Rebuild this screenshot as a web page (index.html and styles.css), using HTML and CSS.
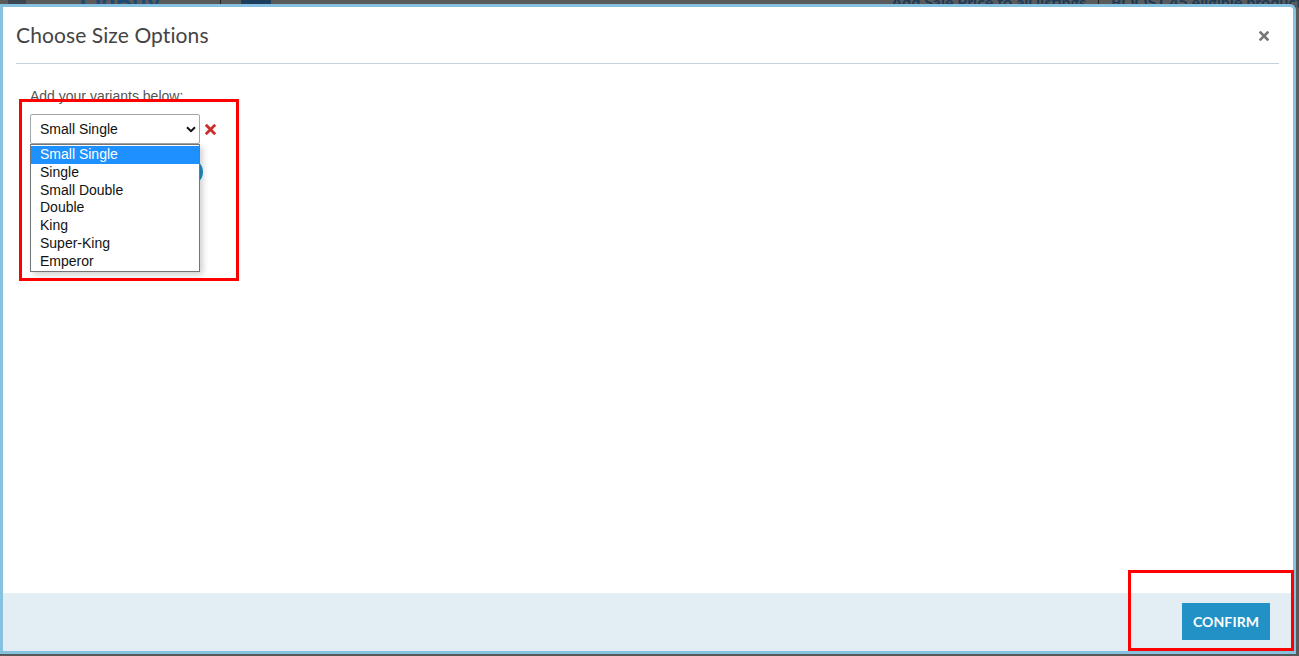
FILE: index.html
```html
<!DOCTYPE html>
<html lang="en">
<head>
<meta charset="utf-8">
<title>Choose Size Options</title>
<link rel="stylesheet" href="styles.css">
</head>
<body>
<div class="backdrop">
  <div class="topnav">
    <span class="nav-menu"></span>
    <span class="nav-logo">OnBuy</span>
    <span class="nav-sep"></span>
    <span class="nav-btn"></span>
    <span class="nav-links">
      <span class="nav-link">Add Sale Price to all listings</span>
      <span class="nav-sep"></span>
      <span class="nav-link">BOOST 45 eligible products</span>
    </span>
  </div>
</div>

<div class="modal">
  <div class="modal-header">
    <h2 class="modal-title">Choose Size Options</h2>
    <button class="modal-close" aria-label="Close">
      <svg width="10" height="10" viewBox="0 0 10 10"><path d="M1.5 1.5 L8.5 8.5 M8.5 1.5 L1.5 8.5" stroke="#777" stroke-width="2.6" stroke-linecap="square"/></svg>
    </button>
  </div>
  <div class="modal-body">
    <p class="hint">Add your variants below:</p>
    <div class="variant-row">
      <div class="select">
        <span class="select-value">Small Single</span>
        <svg class="chevron" width="10" height="7" viewBox="0 0 10 7"><path d="M1 1.2 L5 5.2 L9 1.2" fill="none" stroke="#111" stroke-width="2"/></svg>
        <ul class="options">
          <li class="opt active">Small Single</li>
          <li class="opt">Single</li>
          <li class="opt">Small Double</li>
          <li class="opt">Double</li>
          <li class="opt">King</li>
          <li class="opt">Super-King</li>
          <li class="opt">Emperor</li>
        </ul>
      </div>
      <button class="remove" aria-label="Remove">
        <svg width="11" height="11" viewBox="0 0 11 11"><path d="M1.8 1.8 L9.2 9.2 M9.2 1.8 L1.8 9.2" stroke="#c9302c" stroke-width="2.8" stroke-linecap="square"/></svg>
      </button>
    </div>
    <div class="add-row">
      <span class="add-btn"></span>
    </div>
  </div>
  <div class="modal-footer">
    <button class="confirm">CONFIRM</button>
  </div>
</div>

<div class="annot annot-select"></div>
<div class="annot annot-confirm"></div>
</body>
</html>
```

FILE: styles.css
```css
html, body {
  margin: 0;
  padding: 0;
}
body {
  width: 1299px;
  height: 656px;
  overflow: hidden;
  background: #585858;
  font-family: "Liberation Sans", Arial, sans-serif;
  position: relative;
}

.backdrop {
  height: 656px;
  background: #5a5a5a;
}
.topnav {
  display: flex;
  align-items: center;
  height: 22px;
  margin-top: -10px;
  padding-left: 8px;
  font-family: "Lato", sans-serif;
  font-weight: 700;
  font-size: 16px;
  color: #1b3a57;
}
.nav-menu {
  width: 18px;
  height: 10px;
  background: #3c4650;
}
.nav-logo {
  margin-left: 54px;
  font-size: 26px;
  color: #1d4a73;
}
.nav-sep {
  width: 1px;
  height: 20px;
  margin: 0 12px;
  background: #222;
}
.nav-logo + .nav-sep {
  margin-left: 60px;
}
.nav-btn {
  width: 30px;
  height: 12px;
  margin-left: 8px;
  background: #1d3d5c;
}
.nav-links {
  margin-left: auto;
  margin-right: -10px;
  display: flex;
  align-items: center;
}
.nav-link {
  white-space: nowrap;
}

.modal {
  position: absolute;
  top: 4px;
  left: 0;
  width: 1296px;
  height: 650px;
  box-sizing: border-box;
  border: 3px solid #86c1e0;
  border-radius: 0 6px 0 0;
  background: #fff;
  display: flex;
  flex-direction: column;
}

.modal-header {
  margin: 0 14px 0 13px;
  height: 56px;
  border-bottom: 1px solid #c4d3dc;
  display: flex;
  align-items: center;
  justify-content: space-between;
}
.modal-title {
  margin: 0;
  padding-bottom: 2px;
  font-family: "Lato", sans-serif;
  font-weight: 400;
  font-size: 21px;
  color: #444;
  letter-spacing: 0.1px;
}
.modal-close {
  border: 0;
  background: none;
  padding: 0;
  margin-right: 10px;
  margin-top: 1px;
  display: flex;
}

.modal-body {
  flex: 1;
  padding: 24px 0 0 27px;
}
.hint {
  margin: 0;
  font-size: 14px;
  line-height: 16px;
  color: #555;
}
.variant-row {
  margin-top: 10px;
  display: flex;
  align-items: center;
  gap: 5px;
}
.select {
  position: relative;
  width: 170px;
  height: 30px;
  box-sizing: border-box;
  border: 1px solid #a6a6a6;
  border-radius: 2px;
  background: #fff;
  display: flex;
  align-items: center;
  padding-left: 9px;
  font-size: 14px;
  color: #111;
}
.select-value {
  flex: 1;
}
.chevron {
  margin-right: 3px;
}
.options {
  position: absolute;
  z-index: 2;
  top: 29px;
  left: -1px;
  width: 170px;
  box-sizing: border-box;
  margin: 0;
  padding: 1px 0 0;
  list-style: none;
  background: #fff;
  border: 1px solid #767676;
  box-shadow: 3px 3px 6px rgba(0, 0, 0, 0.18);
}
.opt {
  height: 17.8px;
  line-height: 17.8px;
  padding-left: 9px;
  font-size: 14px;
  color: #111;
}
.opt.active {
  background: #1e90ff;
  color: #fff;
}
.remove {
  border: 0;
  background: none;
  padding: 0;
  display: flex;
}

.add-row {
  margin-top: 15px;
  padding-left: 147px;
}
.add-btn {
  display: block;
  width: 26px;
  height: 26px;
  border-radius: 50%;
  background: #2191c6;
}

.modal-footer {
  height: 58px;
  box-sizing: border-box;
  background: #e2edf4;
  display: flex;
  align-items: flex-start;
  justify-content: flex-end;
  padding: 10px 23px 0 0;
}
.confirm {
  width: 88px;
  height: 37px;
  border: 0;
  background: #2191c6;
  color: #fff;
  font-family: "Lato", sans-serif;
  font-weight: 700;
  font-size: 14px;
  letter-spacing: 0.1px;
  padding: 0;
}

.annot {
  position: absolute;
  border: 3px solid #ff0000;
  box-sizing: border-box;
  z-index: 5;
}
.annot-select {
  left: 19px;
  top: 99px;
  width: 220px;
  height: 182px;
}
.annot-confirm {
  left: 1128px;
  top: 570px;
  width: 166px;
  height: 81px;
}
```
